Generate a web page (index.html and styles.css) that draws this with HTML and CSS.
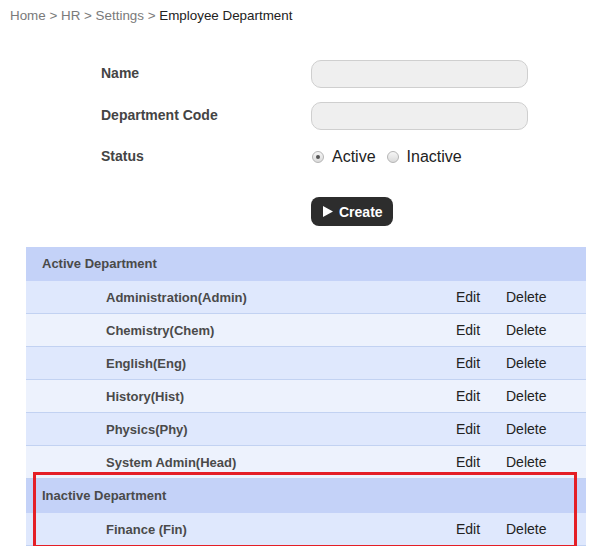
FILE: index.html
```html
<!DOCTYPE html>
<html>
<head>
<meta charset="utf-8">
<link rel="stylesheet" href="styles.css">
</head>
<body>
<div class="crumbs"><span class="muted">Home &gt; HR &gt; Settings &gt; </span><span class="current">Employee Department</span></div>

<div class="form">
  <div class="label">Name</div>
  <div class="field"><div class="input"></div></div>
  <div class="label">Department Code</div>
  <div class="field"><div class="input"></div></div>
  <div class="label">Status</div>
  <div class="field status">
    <span class="radio on"></span><span class="opt">Active</span>
    <span class="radio"></span><span class="opt">Inactive</span>
  </div>
  <div></div>
  <div class="field btnrow"><button class="btn"><svg class="tri" width="10" height="11" viewBox="0 0 10 11"><polygon points="0,0 10,5.5 0,11" fill="#fff"/></svg><span>Create</span></button></div>
</div>

<div class="table">
  <div class="head">Active Department</div>
  <div class="row odd"><span class="nm">Administration(Admin)</span><span class="act">Edit</span><span class="act del">Delete</span></div>
  <div class="row even"><span class="nm">Chemistry(Chem)</span><span class="act">Edit</span><span class="act del">Delete</span></div>
  <div class="row odd"><span class="nm">English(Eng)</span><span class="act">Edit</span><span class="act del">Delete</span></div>
  <div class="row even"><span class="nm">History(Hist)</span><span class="act">Edit</span><span class="act del">Delete</span></div>
  <div class="row odd"><span class="nm">Physics(Phy)</span><span class="act">Edit</span><span class="act del">Delete</span></div>
  <div class="row even"><span class="nm">System Admin(Head)</span><span class="act">Edit</span><span class="act del">Delete</span></div>
  <div class="inactive">
    <div class="head head2">Inactive Department</div>
    <div class="row odd"><span class="nm">Finance (Fin)</span><span class="act">Edit</span><span class="act del">Delete</span></div>
    <div class="mark"></div>
  </div>
</div>
</body>
</html>
```

FILE: styles.css
```css
html, body {
  margin: 0;
  padding: 0;
  background: #fff;
  font-family: "Liberation Sans", Arial, sans-serif;
}
.crumbs {
  padding: 8px 0 0 10px;
  font-size: 13.4px;
  line-height: 16px;
  height: 16px;
}
.muted { color: #7a7a7a; }
.current { color: #222; }

.form {
  display: grid;
  grid-template-columns: 210px 217px;
  grid-auto-rows: auto;
  margin: 36px 0 0 101px;
  row-gap: 14px;
  align-items: center;
}
.label {
  font-size: 14px;
  font-weight: bold;
  color: #444;
  margin-top: -2px;
}
.input {
  height: 26px;
  border: 1px solid #cfcfcf;
  border-radius: 10px;
  background: #efefef;
}
.status {
  display: flex;
  align-items: center;
  height: 26px;
  margin-top: 0;
}
.radio {
  width: 12px;
  height: 12px;
  border-radius: 50%;
  border: 1px solid #b5b5b5;
  background: linear-gradient(#f6f6f6, #dadada);
  box-sizing: border-box;
  margin: 0 8px 0 1px;
  position: relative;
}
.radio.on::after {
  content: "";
  position: absolute;
  left: 3px;
  top: 3px;
  width: 4px;
  height: 4px;
  border-radius: 50%;
  background: #555;
}
.opt {
  font-size: 16px;
  color: #222;
  margin-right: 10px;
}
.btnrow { margin-top: 13px; }
.btn {
  display: flex;
  align-items: center;
  gap: 6px;
  height: 29px;
  width: 82px;
  border: none;
  border-radius: 8px;
  background: #2d2d2d;
  color: #fff;
  font-family: "Liberation Sans", Arial, sans-serif;
  font-size: 14px;
  font-weight: bold;
  padding: 0 0 0 12px;
}
.tri { display: block; }

.table {
  margin: 21px 7px 0 26px;
}
.head {
  height: 34px;
  line-height: 33px;
  background: #c4d2f8;
  padding-left: 16px;
  font-size: 13px;
  font-weight: bold;
  color: #4a4a4a;
}
.row {
  display: flex;
  align-items: center;
  height: 32px;
  border-bottom: 1px solid #c2d2f2;
  font-size: 14px;
}
.odd { background: #dfe8fd; }
.even { background: #edf2fd; }
.nm {
  padding-left: 80px;
  width: 350px;
  font-size: 13px;
  font-weight: bold;
  color: #4a4a4a;
  box-sizing: content-box;
}
.act { color: #222; width: 50px; }
.inactive { position: relative; }
.mark {
  position: absolute;
  left: 7px;
  right: 9px;
  top: -7px;
  bottom: -2px;
  border: 3px solid #e41e26;
  pointer-events: none;
}
```
